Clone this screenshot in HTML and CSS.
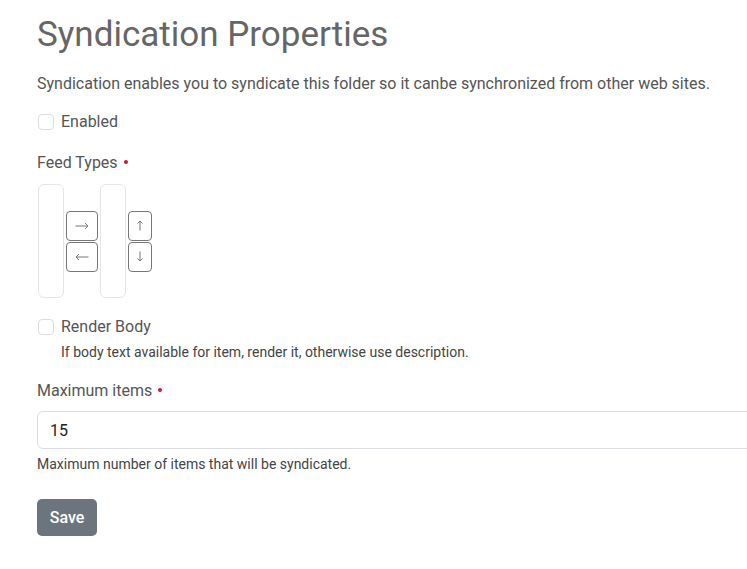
FILE: index.html
```html
<!DOCTYPE html>
<html lang="en">
<head>
  <meta charset="UTF-8" />
  <title>Syndication Properties</title>
  <link rel="stylesheet" href="styles.css">
</head>
<body>
  <div class="page">
    <h1>Syndication Properties</h1>
    <p class="lead">Syndication enables you to syndicate this folder so it canbe synchronized from other web sites.</p>

    <form class="form">
      <div class="check">
        <input type="checkbox" id="enabled">
        <label for="enabled">Enabled</label>
      </div>

      <div class="field">
        <label class="field-label">Feed Types <span class="required"></span></label>
        <div class="ordered">
          <div class="list"></div>
          <div class="btns">
            <button type="button" class="arrow" aria-label="Add">
              <svg width="14" height="8" viewBox="0 0 14 8"><path d="M0.5 4H13M10 1l3 3-3 3" fill="none" stroke="currentColor" stroke-width="1"/></svg>
            </button>
            <button type="button" class="arrow" aria-label="Remove">
              <svg width="14" height="8" viewBox="0 0 14 8"><path d="M13.5 4H1M4 1L1 4l3 3" fill="none" stroke="currentColor" stroke-width="1"/></svg>
            </button>
          </div>
          <div class="list"></div>
          <div class="btns narrow">
            <button type="button" class="arrow" aria-label="Move up">
              <svg width="8" height="11" viewBox="0 0 8 11"><path d="M4 10.5V1M1.5 3.5L4 1l2.5 2.5" fill="none" stroke="currentColor" stroke-width="1"/></svg>
            </button>
            <button type="button" class="arrow" aria-label="Move down">
              <svg width="8" height="11" viewBox="0 0 8 11"><path d="M4 0.5V10M1.5 7.5L4 10l2.5-2.5" fill="none" stroke="currentColor" stroke-width="1"/></svg>
            </button>
          </div>
        </div>
      </div>

      <div class="check">
        <input type="checkbox" id="render-body">
        <label for="render-body">Render Body</label>
      </div>
      <div class="help indent">If body text available for item, render it, otherwise use description.</div>

      <div class="field">
        <label class="field-label" for="max-items">Maximum items <span class="required"></span></label>
        <input type="text" id="max-items" class="text-input" value="15">
        <div class="help">Maximum number of items that will be syndicated.</div>
      </div>

      <button type="button" class="save">Save</button>
    </form>
  </div>
</body>
</html>
```

FILE: styles.css
```css
html, body {
  overflow: hidden;
}

body {
  margin: 0;
  font-family: Roboto, "Liberation Sans", sans-serif;
  color: #555;
  background: #fff;
}

.page {
  padding: 14px 0 0 37px;
}

h1 {
  margin: 0;
  font-size: 35px;
  font-weight: 400;
  color: #666;
  line-height: 42px;
}

.lead {
  margin: 16px 0 0;
  font-size: 16px;
  line-height: 24px;
}

.form {
  margin-top: 14px;
}

.check {
  display: flex;
  align-items: center;
  gap: 7px;
  font-size: 16px;
  line-height: 24px;
}

.check input {
  appearance: none;
  width: 16px;
  height: 16px;
  margin: 0 0 0 1px;
  border: 1px solid #dcdde3;
  border-radius: 4px;
  background: #fff;
}

.field {
  margin-top: 17px;
}

.field-label {
  display: block;
  font-size: 16px;
  line-height: 24px;
}

.required::after {
  content: "";
  display: inline-block;
  width: 4px;
  height: 4px;
  border-radius: 50%;
  background: #c4183c;
  vertical-align: middle;
  margin-left: 2px;
  margin-bottom: 4px;
}

.ordered {
  display: flex;
  align-items: center;
  margin-top: 9px;
  margin-left: 1px;
  gap: 2px;
}

.list {
  width: 24px;
  height: 112px;
  border: 1px solid #e4e5ea;
  border-radius: 6px;
}

.btns {
  display: flex;
  flex-direction: column;
  gap: 1px;
}

.arrow {
  display: flex;
  align-items: center;
  justify-content: center;
  width: 32px;
  height: 30px;
  padding: 0;
  border: 1px solid #777;
  border-radius: 4px;
  background: #fff;
  color: #777;
}

.btns.narrow .arrow {
  width: 24px;
}

.field + .check {
  margin-top: 17px;
}

.help {
  font-size: 14px;
  line-height: 20px;
  color: #444;
  margin-top: 5px;
}

.help.indent {
  margin-left: 24px;
  margin-top: 3px;
}

.text-input {
  display: block;
  box-sizing: border-box;
  width: 760px;
  height: 38px;
  margin-top: 8px;
  padding: 0 12px;
  border: 1px solid #dcdde3;
  border-radius: 6px;
  font-family: inherit;
  font-size: 16px;
  color: #222;
}

.text-input + .help {
  margin-top: 5px;
}

.save {
  margin-top: 25px;
  width: 60px;
  height: 37px;
  padding: 0;
  border: none;
  border-radius: 5px;
  background: #6c757d;
  color: #fff;
  font-family: inherit;
  font-size: 16px;
  font-weight: 500;
}
```
